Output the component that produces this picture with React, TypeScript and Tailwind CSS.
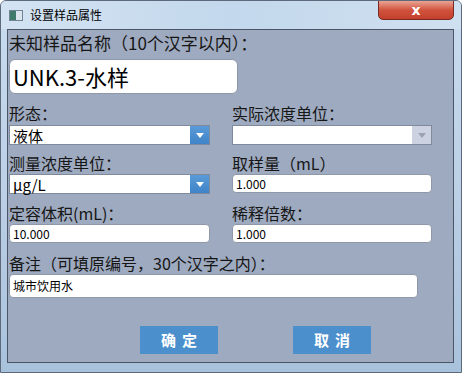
import React from 'react'

const cjk = { fontFamily: '"Microsoft YaHei", "Noto Sans CJK SC", "Noto Sans", sans-serif' }

function Label({ children, className = '' }: { children: React.ReactNode; className?: string }) {
  return <div className={`text-[16px] leading-[20px] text-[#161616] ${className}`}>{children}</div>
}

function TextBox({ value, className = '' }: { value: string; className?: string }) {
  return (
    <div className={`h-[19px] bg-white rounded-[4px] border border-[#8e98a8] flex items-center px-[3px] text-[12px] text-black ${className}`}>
      {value}
    </div>
  )
}

function Combo({ value, disabled = false }: { value: string; disabled?: boolean }) {
  return (
    <div className="h-[20px] bg-white border border-[#7f8a9c] flex items-stretch">
      <div className="flex-1 flex items-center px-[3px] text-[15px] leading-none text-black">{value}</div>
      <div
        className={`w-[19px] flex items-center justify-center ${
          disabled ? 'bg-[#ccd2e2]' : 'bg-gradient-to-b from-[#5a9ad8] to-[#3f84c8]'
        }`}
      >
        <svg width="8" height="5" viewBox="0 0 8 5">
          <path d="M0 0 L8 0 L4 5 Z" fill={disabled ? '#9aa2b4' : '#ffffff'} />
        </svg>
      </div>
    </div>
  )
}

export default function App() {
  return (
    <div
      className="w-[462px] h-[373px] flex flex-col bg-gradient-to-b from-[#c9dcef] via-[#bcd0e6] to-[#a9c2dc] border border-[#5c6a7c] rounded-t-[6px] overflow-hidden"
      style={cjk}
    >
      {/* title bar */}
      <div className="h-[28px] relative flex items-center pl-[8px] bg-gradient-to-r from-[#d3e3f2] via-[#c3d8ec] to-[#cfe0f0]">
        <div className="w-[14px] h-[11px] border border-[#6f8296] bg-[#e9eef3] flex">
          <div className="w-[6px] h-full bg-[#3f7a6a]" />
          <div className="flex-1 bg-[#dbe4ec]" />
        </div>
        <span className="ml-[7px] text-[12px] text-black">设置样品属性</span>
        <div className="absolute right-[7px] top-[-1px] w-[76px] h-[20px] rounded-b-[5px] border border-[#7a2a24] bg-gradient-to-b from-[#e9a393] via-[#d0533e] to-[#c2402c] flex items-center justify-center">
          <span className="text-white font-bold text-[14px] leading-none" style={{ fontFamily: '"DejaVu Sans", sans-serif' }}>
            x
          </span>
        </div>
      </div>

      {/* content */}
      <div className="flex-1 ml-[6px] mr-[7px] mb-[9px] bg-[#9eaabf] border border-[#4b5566] pl-[1px] pt-[3px] flex flex-col">
        <Label className="text-[17px]">未知样品名称（10个汉字以内）：</Label>
        <div className="mt-[6px] w-[229px] h-[35px] bg-white rounded-[6px] border border-[#8e98a8] flex items-center px-[3px] text-[22px] text-black">
          UNK.3-水样
        </div>

        <div className="mt-[9px] grid grid-cols-[201px_200px] gap-x-[22px]">
          <div>
            <Label>形态：</Label>
            <div className="mt-[2px]">
              <Combo value="液体" />
            </div>
          </div>
          <div>
            <Label>实际浓度单位：</Label>
            <div className="mt-[2px]">
              <Combo value="" disabled />
            </div>
          </div>

          <div className="mt-[8px]">
            <Label>测量浓度单位：</Label>
            <div className="mt-[1px]">
              <Combo value="μg/L" />
            </div>
          </div>
          <div className="mt-[8px]">
            <Label>取样量（mL）</Label>
            <TextBox value="1.000" className="mt-[1px]" />
          </div>

          <div className="mt-[9px]">
            <Label>定容体积(mL)：</Label>
            <TextBox value="10.000" className="mt-[1px]" />
          </div>
          <div className="mt-[9px]">
            <Label>稀释倍数：</Label>
            <TextBox value="1.000" className="mt-[1px]" />
          </div>
        </div>

        <Label className="mt-[10px]">备注（可填原编号，30个汉字之内）：</Label>
        <TextBox value="城市饮用水" className="mt-[1px] w-[409px] h-[24px]" />

        <div className="mt-[28px] flex">
          <div className="ml-[131px] w-[78px] h-[28px] bg-[#4b8fcc] flex items-center justify-center text-white font-bold text-[15px] tracking-[6px] pl-[6px]">
            确定
          </div>
          <div className="ml-[75px] w-[78px] h-[28px] bg-[#4b8fcc] flex items-center justify-center text-white font-bold text-[15px] tracking-[6px] pl-[6px]">
            取消
          </div>
        </div>
      </div>
    </div>
  )
}
